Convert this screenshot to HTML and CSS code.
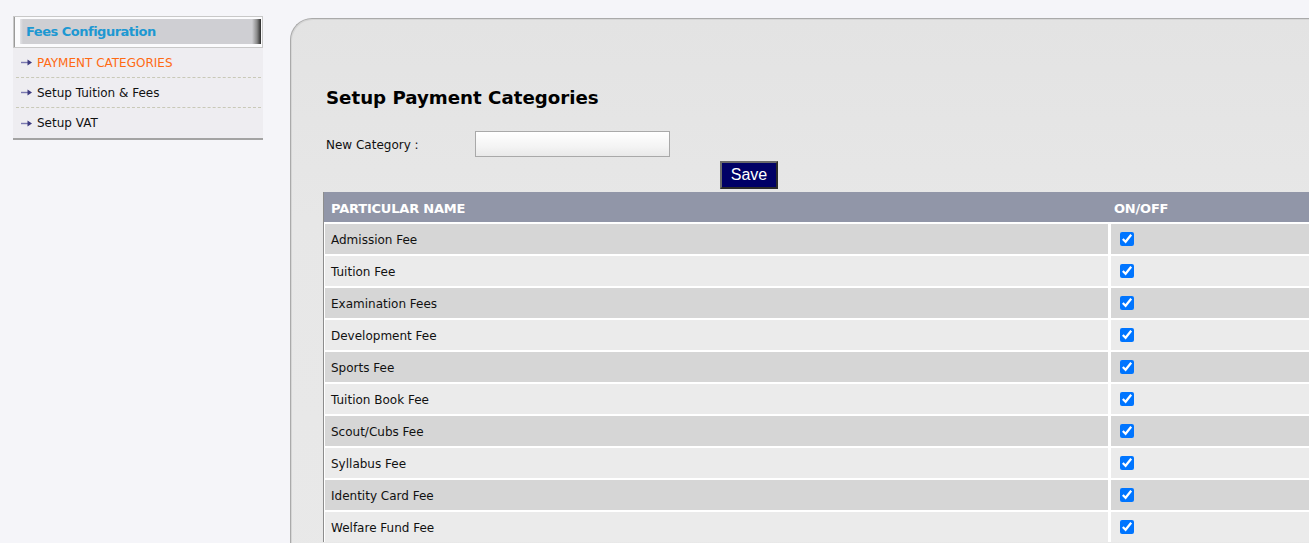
FILE: index.html
```html
<!DOCTYPE html>
<html lang="en">
<head>
<meta charset="utf-8">
<title>Setup Payment Categories</title>
<link rel="stylesheet" href="styles.css">
</head>
<body>
<div class="page">
  <aside class="sidebar">
    <div class="side-head"><div class="side-bar">Fees Configuration</div></div>
    <ul class="menu">
      <li class="menu-item active"><svg class="arrow" width="11" height="7" viewBox="0 0 11 7"><rect x="0" y="2.8" width="7.5" height="1.4" fill="#7a78b0"/><polygon points="6.5,0.5 11,3.5 6.5,6.5" fill="#3c3a80"/></svg>PAYMENT CATEGORIES</li>
      <li class="menu-item"><svg class="arrow" width="11" height="7" viewBox="0 0 11 7"><rect x="0" y="2.8" width="7.5" height="1.4" fill="#7a78b0"/><polygon points="6.5,0.5 11,3.5 6.5,6.5" fill="#3c3a80"/></svg>Setup Tuition &amp; Fees</li>
      <li class="menu-item"><svg class="arrow" width="11" height="7" viewBox="0 0 11 7"><rect x="0" y="2.8" width="7.5" height="1.4" fill="#7a78b0"/><polygon points="6.5,0.5 11,3.5 6.5,6.5" fill="#3c3a80"/></svg>Setup VAT</li>
    </ul>
  </aside>
  <main class="panel">
    <h1 class="title">Setup Payment Categories</h1>
    <div class="form-row">
      <label class="label" for="cat">New Category :</label>
      <input class="text-input" id="cat" type="text">
    </div>
    <div class="btn-row"><button class="save-btn" type="button">Save</button></div>
    <table class="grid">
      <thead>
        <tr><th class="col-name">PARTICULAR NAME</th><th class="col-on">ON/OFF</th></tr>
      </thead>
      <tbody>
        <tr class="odd"><td>Admission Fee</td><td class="on"><input type="checkbox" checked></td></tr>
        <tr class="even"><td>Tuition Fee</td><td class="on"><input type="checkbox" checked></td></tr>
        <tr class="odd"><td>Examination Fees</td><td class="on"><input type="checkbox" checked></td></tr>
        <tr class="even"><td>Development Fee</td><td class="on"><input type="checkbox" checked></td></tr>
        <tr class="odd"><td>Sports Fee</td><td class="on"><input type="checkbox" checked></td></tr>
        <tr class="even"><td>Tuition Book Fee</td><td class="on"><input type="checkbox" checked></td></tr>
        <tr class="odd"><td>Scout/Cubs Fee</td><td class="on"><input type="checkbox" checked></td></tr>
        <tr class="even"><td>Syllabus Fee</td><td class="on"><input type="checkbox" checked></td></tr>
        <tr class="odd"><td>Identity Card Fee</td><td class="on"><input type="checkbox" checked></td></tr>
        <tr class="even"><td>Welfare Fund Fee</td><td class="on"><input type="checkbox" checked></td></tr>
      </tbody>
    </table>
  </main>
</div>
</body>
</html>
```
FILE: styles.css
```css
html, body {
  margin: 0;
  padding: 0;
  overflow: hidden;
}
body {
  background: #f5f5f9;
  font-family: "DejaVu Sans", Verdana, sans-serif;
  font-size: 12px;
  color: #111;
}
.page {
  display: flex;
  align-items: flex-start;
  gap: 27px;
  padding: 16px 0 0 13px;
}
.sidebar {
  flex: none;
  width: 250px;
}
.side-head {
  box-sizing: border-box;
  height: 32px;
  border: 1px solid #c8c8c8;
  background: #fbfbfd;
  padding: 2px 1px 3px 6px;
  box-shadow: inset 1px 0 0 #9a9a9a;
}
.side-bar {
  height: 25px;
  line-height: 25px;
  padding-left: 6px;
  background: linear-gradient(to right, #e4e4e8 0, #cfcfd3 3px, #cfcfd3 calc(100% - 9px), #8a8a8a calc(100% - 4px), #2a2a2a 100%);
  color: #1d98d2;
  font-weight: bold;
  font-size: 13px;
  letter-spacing: -0.5px;
}
.menu {
  list-style: none;
  margin: 0;
  padding: 0 2px 0 3px;
  background: #eeedf1;
  border-bottom: 2px solid #a3a3a3;
}
.menu-item {
  display: flex;
  align-items: center;
  gap: 5px;
  height: 29px;
  padding-left: 5px;
  color: #111;
  border-bottom: 1px dashed #c9c9b8;
}
.menu-item:last-child {
  border-bottom: none;
  height: 30px;
}
.menu-item.active {
  color: #ff6a13;
}
.arrow {
  flex: none;
}
.panel {
  flex: none;
  width: 1100px;
  min-height: 600px;
  margin-top: 2px;
  box-sizing: border-box;
  padding: 68px 0 0 32px;
  border: 1px solid #aaaaaa;
  border-right: none;
  border-bottom: none;
  border-top-left-radius: 22px;
  background: linear-gradient(to bottom, #e3e3e3 0, #e7e7e7 200px, #e9e9e9 100%);
  box-shadow: inset 1px 1px 0 #d6d6d6;
}
.title {
  margin: 0 0 0 3px;
  font-size: 18.2px;
  line-height: 22px;
  font-weight: bold;
  color: #000;
}
.form-row {
  display: flex;
  align-items: center;
  margin: 22px 0 0 3px;
  height: 26px;
}
.label {
  width: 149px;
  flex: none;
  color: #111;
  padding-top: 1px;
}
.text-input {
  box-sizing: border-box;
  width: 195px;
  height: 26px;
  margin: 0;
  border: 1px solid #a9a9a9;
  background: linear-gradient(to bottom, #ffffff 0, #f4f4f4 60%, #e9e9e9 100%);
  padding: 2px 4px;
  font: inherit;
  outline: none;
}
.btn-row {
  margin-top: 4px;
  padding-left: 397px;
  height: 28px;
}
.save-btn {
  box-sizing: border-box;
  width: 58px;
  height: 28px;
  margin: 0;
  padding: 0;
  background: #000066;
  color: #fff;
  font-family: "Liberation Sans", Arial, sans-serif;
  font-size: 16px;
  border: 2px solid;
  border-color: #6a6a6a #2a2a2a #2a2a2a #6a6a6a;
  cursor: pointer;
}
.grid {
  margin-top: 3px;
  width: 1000px;
  border-collapse: separate;
  border-spacing: 0;
  border-left: 1px solid #8d8d8d;
  table-layout: fixed;
}
.grid th {
  height: 30px;
  padding: 2px 0 0 7px;
  box-sizing: border-box;
  background: #9196a8;
  color: #fff;
  font-weight: bold;
  font-size: 13px;
  text-align: left;
  letter-spacing: -0.2px;
}
.grid th.col-name {
  width: 784px;
}
.grid th.col-on {
  padding-left: 6px;
}
.grid td {
  box-sizing: border-box;
  height: 32px;
  padding: 1px 0 0 6px;
  border-top: 2px solid #fff;
  border-left: 1px solid #fff;
  color: #111;
}
.grid td.on {
  border-left: 3px solid #fff;
  padding: 0 0 0 6px;
}
.grid td.on input {
  width: 14px;
  height: 14px;
  margin: 0 3px 0 3px;
  vertical-align: middle;
}
.grid tr.odd td {
  background: #d6d6d6;
}
.grid tr.even td {
  background: #ebebeb;
}
```
